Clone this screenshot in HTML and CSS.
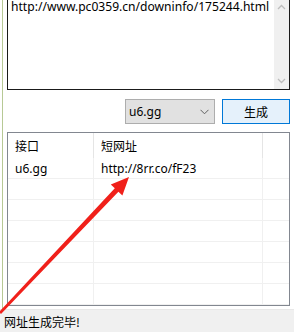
FILE: index.html
```html
<!DOCTYPE html>
<html>
<head>
<meta charset="utf-8">
<link rel="stylesheet" href="styles.css">
</head>
<body>
<div class="app">
  <div class="main">
    <div class="textbox">
      <div class="textbox-text">http://www.pc0359.cn/downinfo/175244.html</div>
      <div class="vscroll">
        <svg class="chev" width="9" height="6" viewBox="0 0 9 6"><path d="M1 5 L4.5 1.5 L8 5" fill="none" stroke="#bdbdbd" stroke-width="1.3"/></svg>
        <svg class="chev" width="9" height="6" viewBox="0 0 9 6"><path d="M1 1 L4.5 4.5 L8 1" fill="none" stroke="#bdbdbd" stroke-width="1.3"/></svg>
      </div>
    </div>
    <div class="controls">
      <div class="combo">
        <span>u6.gg</span>
        <svg width="9" height="6" viewBox="0 0 9 6"><path d="M0.5 0.8 L4.5 4.8 L8.5 0.8" fill="none" stroke="#606060" stroke-width="1"/></svg>
      </div>
      <div class="btn">生成</div>
    </div>
    <div class="listview">
      <div class="lv-head">
        <div class="hcell">接口</div>
        <div class="hcell">短网址</div>
        <div class="hcell"></div>
      </div>
      <div class="lv-body">
        <div class="row"><div class="cell">u6.gg</div><div class="cell">http://8rr.co/fF23</div><div class="cell"></div></div>
        <div class="row"><div class="cell"></div><div class="cell"></div><div class="cell"></div></div>
        <div class="row"><div class="cell"></div><div class="cell"></div><div class="cell"></div></div>
        <div class="row"><div class="cell"></div><div class="cell"></div><div class="cell"></div></div>
        <div class="row"><div class="cell"></div><div class="cell"></div><div class="cell"></div></div>
        <div class="row"><div class="cell"></div><div class="cell"></div><div class="cell"></div></div>
        <div class="row last"><div class="cell"></div><div class="cell"></div><div class="cell"></div></div>
      </div>
    </div>
  </div>
  <div class="status">网址生成完毕!</div>
  <svg class="arrow" width="294" height="332" viewBox="0 0 294 332">
    <polygon points="-1,312 114.8,188.3 110.8,184.5 129,177 122.4,195.5 118.4,191.7 1,314" fill="#f0201a"/>
  </svg>
</div>
</body>
</html>
```

FILE: styles.css
```css
html, body {
  margin: 0;
  padding: 0;
  background: #ffffff;
}
body {
  width: 294px;
  height: 332px;
  overflow: hidden;
  font-family: "Noto Sans", "Noto Sans CJK SC", sans-serif;
  font-size: 12px;
  color: #000;
}
.app {
  position: relative;
  width: 294px;
  height: 332px;
  display: flex;
  flex-direction: column;
}
.main {
  margin-left: 2px;
  border-left: 1px solid #b7c995;
  padding-left: 4px;
  padding-right: 4px;
  height: 309px;
  display: flex;
  flex-direction: column;
}
.textbox {
  width: 283px;
  height: 90px;
  box-sizing: border-box;
  border: 1px solid #1a1a1a;
  border-top: none;
  display: flex;
  justify-content: space-between;
}
.textbox-text {
  padding-left: 3px;
  padding-top: 1px;
  font-size: 12.1px;
  line-height: 12px;
  white-space: nowrap;
}
.vscroll {
  width: 15px;
  background: #f0f0f0;
  display: flex;
  flex-direction: column;
  justify-content: space-between;
  align-items: center;
  padding: 4px 0 5px;
}
.chev { display: block; }
.controls {
  margin-top: 9px;
  height: 25px;
  display: flex;
  justify-content: flex-end;
  gap: 7px;
}
.combo {
  width: 90px;
  box-sizing: border-box;
  background: #e1e1e1;
  border: 1px solid #adadad;
  display: flex;
  align-items: center;
  justify-content: space-between;
  padding: 0 5px 0 3px;
}
.btn {
  width: 68px;
  box-sizing: border-box;
  background: #e5f1fb;
  border: 1px solid #0078d7;
  display: flex;
  align-items: center;
  justify-content: center;
  font-family: "Noto Sans CJK SC", sans-serif;
}
.listview {
  margin-top: 8px;
  width: 283px;
  height: 174px;
  box-sizing: border-box;
  border: 1px solid #828790;
  display: flex;
  flex-direction: column;
  overflow: hidden;
}
.lv-head {
  height: 25px;
  flex: none;
  display: grid;
  grid-template-columns: 86px 169px 26px;
}
.hcell {
  border-right: 1px solid #e5e5e5;
  padding-left: 7px;
  display: flex;
  align-items: center;
  font-family: "Noto Sans CJK SC", sans-serif;
}
.hcell:last-child { border-right: none; }
.row {
  height: 21px;
  box-sizing: border-box;
  border-bottom: 1px solid #f0f0f0;
  display: grid;
  grid-template-columns: 86px 169px 26px;
}
.cell {
  border-right: 1px solid #f0f0f0;
  padding-left: 7px;
  display: flex;
  align-items: center;
  white-space: nowrap;
}
.cell:last-child { border-right: none; }
.status {
  flex: 1;
  background: #f0f0f0;
  border-top: 1px solid #e8e8e8;
  padding-left: 4px;
  display: flex;
  align-items: center;
  font-family: "Noto Sans CJK SC", sans-serif;
}
.arrow {
  position: absolute;
  left: 0;
  top: 0;
  pointer-events: none;
}
```
